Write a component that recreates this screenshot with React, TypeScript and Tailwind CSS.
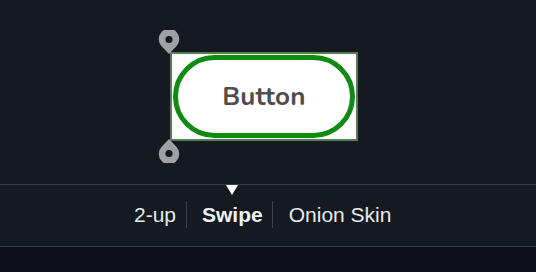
import type { ReactNode } from 'react';

function Handle({ flip }: { flip?: boolean }) {
  return (
    <svg width="22" height="24" viewBox="0 0 22 24" className={flip ? 'rotate-180' : ''}>
      <path d="M11 24 L3.6 16.2 A10.3 10.3 0 1 1 18.4 16.2 Z" fill="#9ea1a6" />
      <circle cx="11" cy="9.5" r="3.6" fill="#151a21" />
    </svg>
  );
}

function Tab({ children, active, first }: { children: ReactNode; active?: boolean; first?: boolean }) {
  if (active) {
    return <span className="pl-[15px] pr-[9px] font-bold text-[#f0f3f6]">{children}</span>;
  }
  return (
    <span className={first ? 'pr-[10px] text-[#e6e9ec]' : 'pl-[16px] text-[#e6e9ec]'}>
      {children}
    </span>
  );
}

export default function App() {
  return (
    <div
      className="w-[536px] h-[272px] flex flex-col bg-[#0d1117] overflow-hidden"
      style={{ fontFamily: '"Liberation Sans", Arial, sans-serif' }}
    >
      {/* image swipe area */}
      <div className="h-[184px] bg-[#151a21] pt-[52px] pl-[170px]">
        <div className="relative w-[188px] h-[89px]">
          <div className="absolute left-[-12px] top-[-22px]">
            <Handle />
          </div>
          <div className="absolute left-[-12px] bottom-[-22px]">
            <Handle flip />
          </div>
          <div className="w-full h-full border-2 border-[#567d56] bg-white p-[1px]">
            <div className="w-full h-full rounded-full border-[5px] border-[#108a10] flex items-center justify-center">
              <span
                className="text-[26px] font-bold text-[#4d4d4d] tracking-[0.2px]"
                style={{ fontFamily: '"Nunito", "Open Sans", sans-serif' }}
              >
                Button
              </span>
            </div>
          </div>
        </div>
      </div>

      {/* view mode tabs */}
      <div className="relative h-[63px] bg-[#151a21] border-y border-[#3a4049] flex items-center pl-[134px] pb-[2px] text-[21px]">
        <span className="absolute left-[226px] top-0 w-0 h-0 border-x-[6px] border-x-transparent border-t-[10px] border-t-white" />
        <Tab first>2-up</Tab>
        <span className="w-px h-[27px] bg-[#3d434b]" />
        <Tab active>Swipe</Tab>
        <span className="w-px h-[27px] bg-[#3d434b]" />
        <Tab>Onion Skin</Tab>
      </div>

      <div className="flex-1 bg-[#0d1117]" />
    </div>
  );
}
